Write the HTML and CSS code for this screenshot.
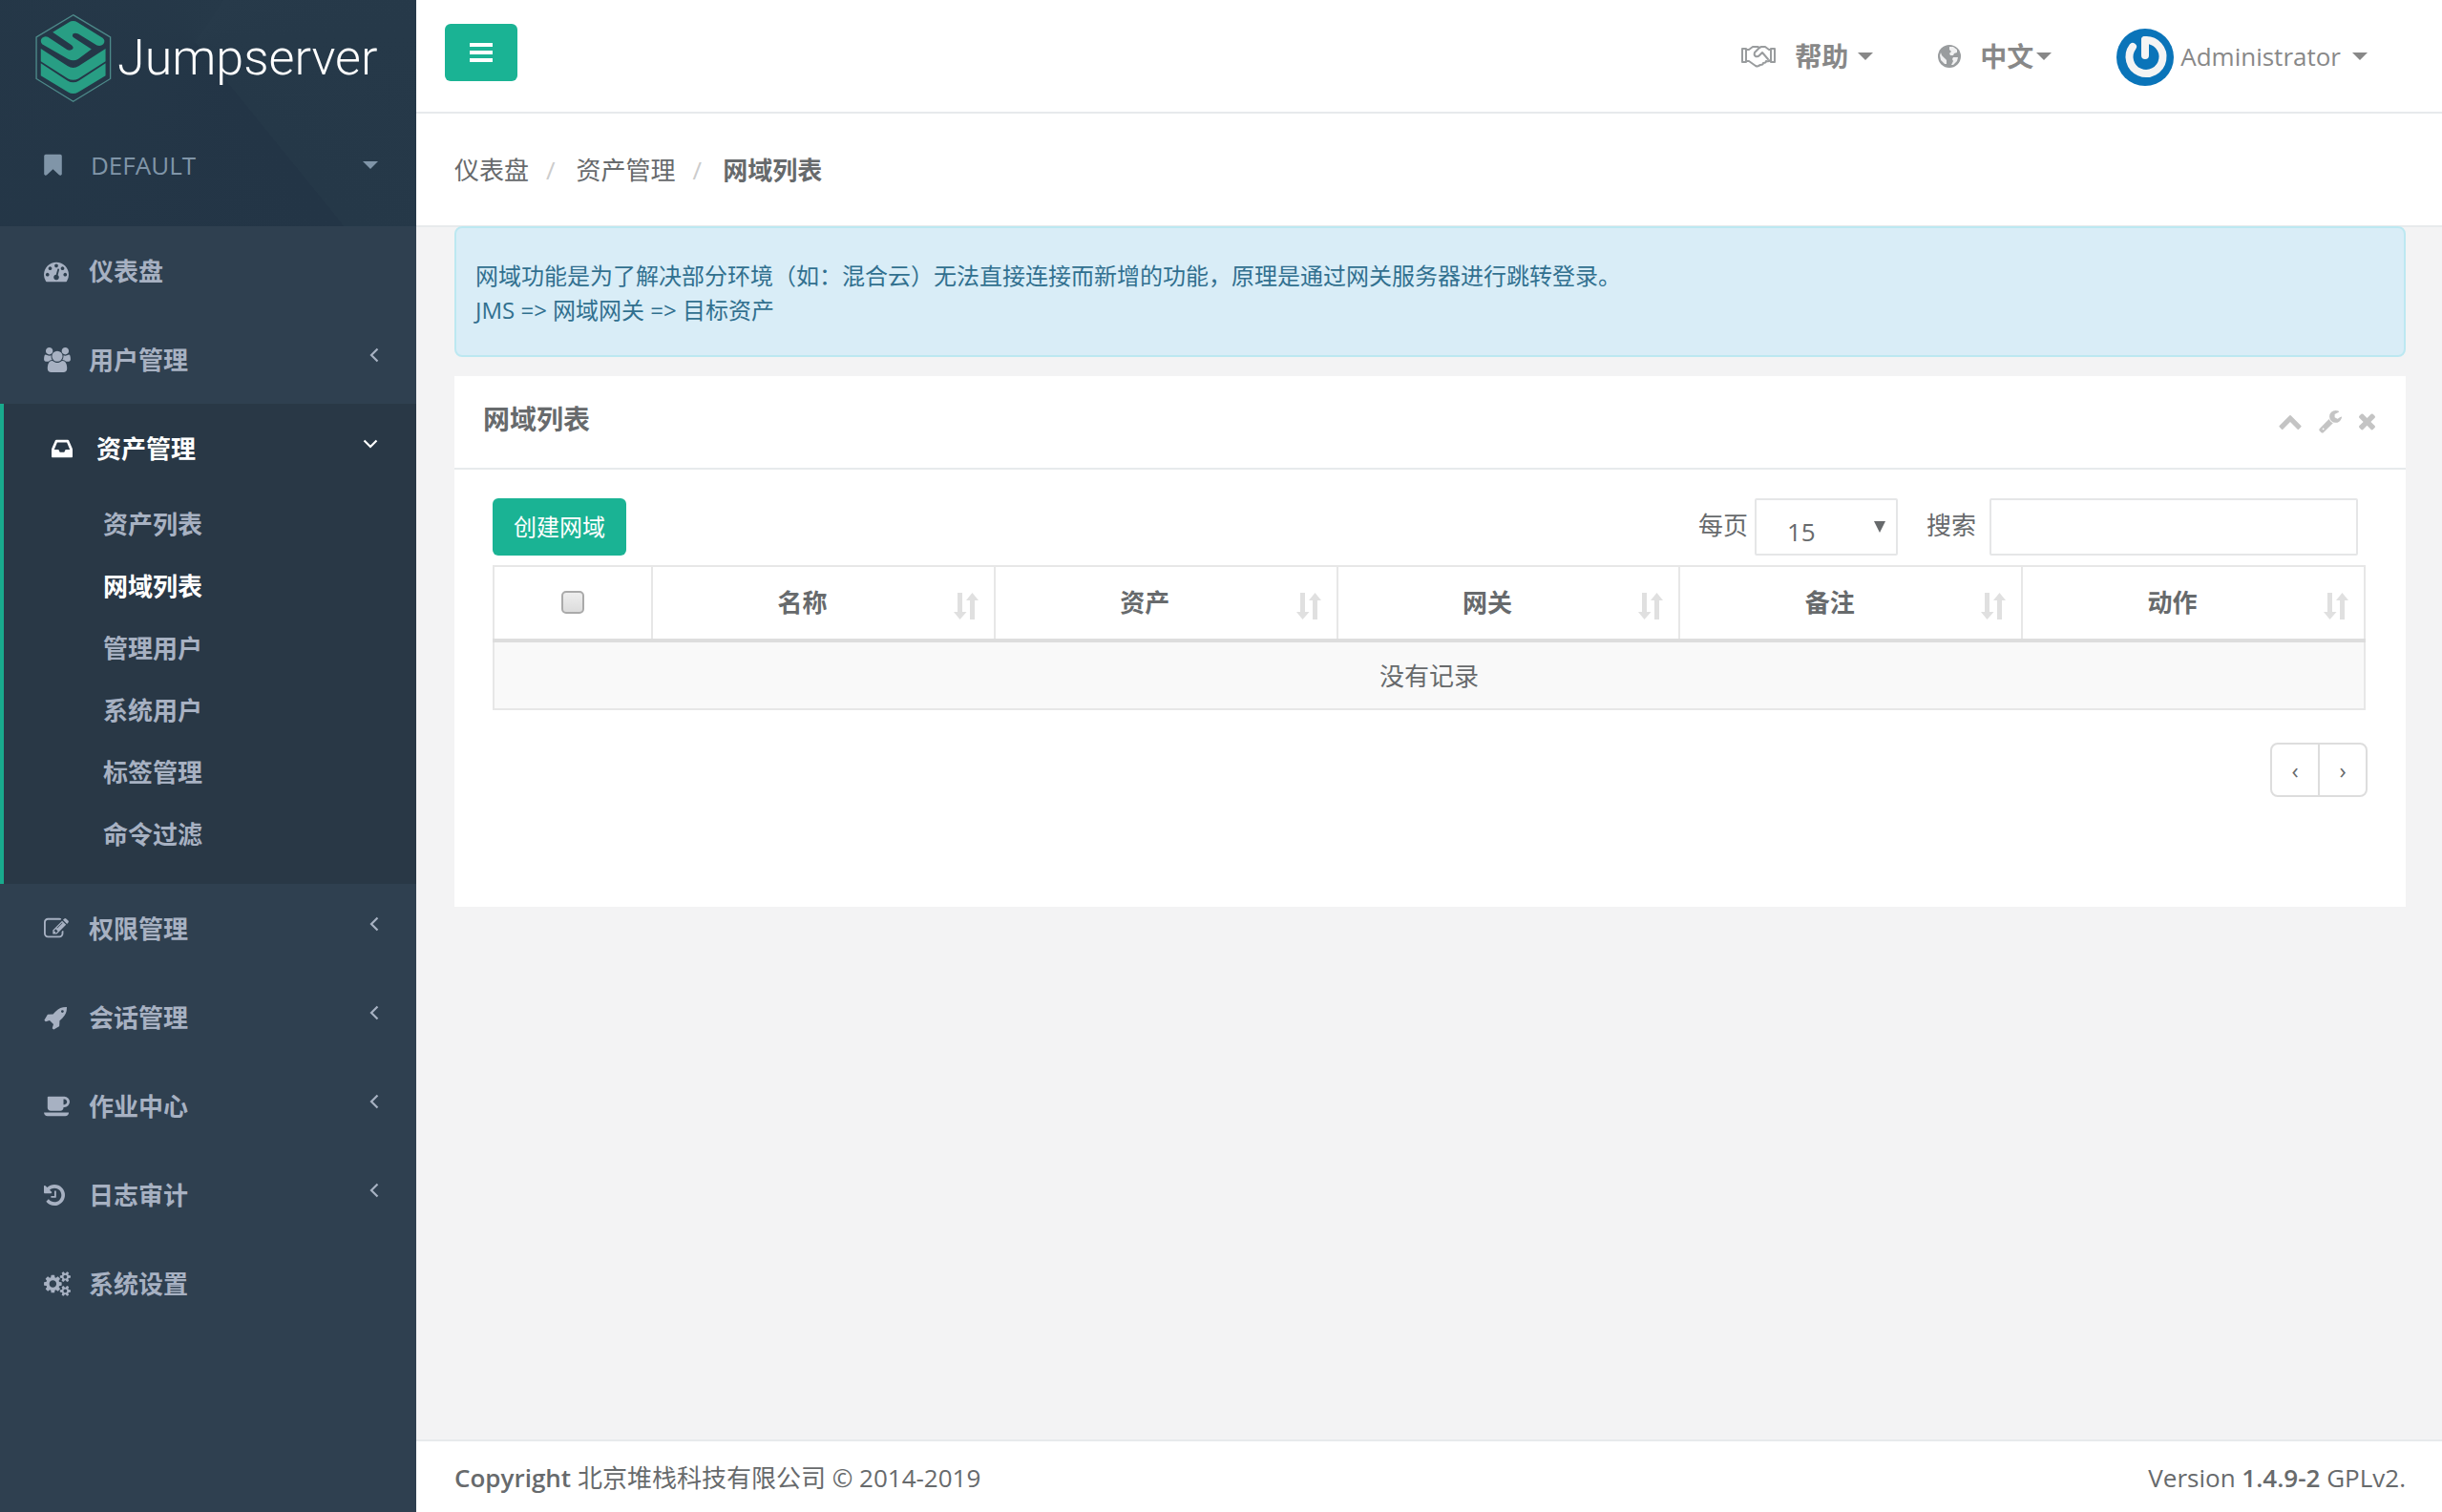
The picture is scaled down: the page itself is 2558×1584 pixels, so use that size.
FILE: index.html
```html
<!DOCTYPE html>
<html lang="zh-CN">
<head>
<meta charset="utf-8">
<meta name="viewport" content="width=device-width, initial-scale=1">
<title>网域列表 - Jumpserver</title>
<link rel="stylesheet" href="styles.css">
</head>
<body>
<svg class="sprite" aria-hidden="true">
  <symbol id="i-bookmark" viewBox="256 0 1280 1792"><path d="M1420 128q23 0 44 9 33 13 52.5 41t19.5 62v1289q0 34-19.5 62t-52.5 41q-19 8-44 8-48 0-83-32l-441-424-441 424q-36 33-83 33-23 0-44-9-33-13-52.5-41t-19.5-62v-1289q0-34 19.5-62t52.5-41q21-9 44-9h1048z"/></symbol>
  <symbol id="i-dashboard" viewBox="0 0 1792 1792"><path d="M384 1152q0-53-37.5-90.5t-90.5-37.5-90.5 37.5-37.5 90.5 37.5 90.5 90.5 37.5 90.5-37.5 37.5-90.5zm192-448q0-53-37.5-90.5t-90.5-37.5-90.5 37.5-37.5 90.5 37.5 90.5 90.5 37.5 90.5-37.5 37.5-90.5zm428 481l101-382q6-26-7.5-48.5t-38.5-29.5-48 6.5-30 39.5l-101 382q-60 5-107 43.5t-63 98.5q-20 77 20 146t117 89 146-20 89-117q16-60-6-117t-72-91zm660-33q0-53-37.5-90.5t-90.5-37.5-90.5 37.5-37.5 90.5 37.5 90.5 90.5 37.5 90.5-37.5 37.5-90.5zm-640-640q0-53-37.5-90.5t-90.5-37.5-90.5 37.5-37.5 90.5 37.5 90.5 90.5 37.5 90.5-37.5 37.5-90.5zm448 192q0-53-37.5-90.5t-90.5-37.5-90.5 37.5-37.5 90.5 37.5 90.5 90.5 37.5 90.5-37.5 37.5-90.5zm320 448q0 261-141 483-19 29-54 29h-1402q-35 0-54-29-141-221-141-483 0-182 71-348t191-286 286-191 348-71 348 71 286 191 191 286 71 348z"/></symbol>
  <symbol id="i-users" viewBox="0 0 1920 1792"><path d="M593 896q-162 5-265 128h-134q-82 0-138-40.5t-56-118.5q0-353 124-353 6 0 43.5 21t97.5 42.5 119 21.5q67 0 133-23-5 37-5 66 0 139 81 256zm1071 637q0 120-73 189.5t-194 69.5h-874q-121 0-194-69.5t-73-189.5q0-53 3.5-103.5t14-109 26.5-108.5 43-97.5 62-81 85.5-53.5 111.5-20q10 0 43 21.5t73 48 107 48 135 21.5 135-21.5 107-48 73-48 43-21.5q61 0 111.5 20t85.5 53.5 62 81 43 97.5 26.5 108.5 14 109 3.5 103.5zm-1024-1277q0 106-75 181t-181 75-181-75-75-181 75-181 181-75 181 75 75 181zm704 384q0 159-112.5 271.5t-271.5 112.5-271.5-112.5-112.5-271.5 112.5-271.5 271.5-112.5 271.5 112.5 112.5 271.5zm576 225q0 78-56 118.5t-138 40.5h-134q-103-123-265-128 81-117 81-256 0-29-5-66 66 23 133 23 59 0 119-21.5t97.5-42.5 43.5-21q124 0 124 353zm-128-609q0 106-75 181t-181 75-181-75-75-181 75-181 181-75 181 75 75 181z"/></symbol>
  <symbol id="i-inbox" viewBox="128 0 1536 1792"><path d="M1151 960h316q-1-3-2.5-8t-2.5-8l-212-496h-708l-212 496q-1 2-2.5 8t-2.5 8h316l95 192h320zm513 30v482q0 26-19 45t-45 19h-1408q-26 0-45-19t-19-45v-482q0-62 25-123l238-552q10-25 36.5-42t52.5-17h832q26 0 52.5 17t36.5 42l238 552q25 61 25 123z"/></symbol>
  <symbol id="i-edit" viewBox="0 0 1792 1792"><path d="M888 1184l116-116-152-152-116 116v56h96v96h56zm440-720q-16-16-33 1l-350 350q-17 17-1 33t33-1l350-350q17-17 1-33zm80 594v190q0 119-84.5 203.5t-203.5 84.5h-832q-119 0-203.5-84.5t-84.5-203.5v-832q0-119 84.5-203.5t203.5-84.5h832q63 0 117 25 15 7 18 23 3 17-9 29l-49 49q-14 14-32 8-23-6-45-6h-832q-66 0-113 47t-47 113v832q0 66 47 113t113 47h832q66 0 113-47t47-113v-126q0-13 9-22l64-64q15-15 35-7t20 29zm-96-738l288 288-672 672h-288v-288zm444 132l-92 92-288-288 92-92q28-28 68-28t68 28l152 152q28 28 28 68t-28 68z"/></symbol>
  <symbol id="i-rocket" viewBox="0 0 1664 1792"><path d="M1440 448q0-40-28-68t-68-28-68 28-28 68 28 68 68 28 68-28 28-68zm224-288q0 249-75.5 430.5t-253.5 360.5q-81 80-195 176l-20 379q-2 16-16 26l-384 224q-7 4-16 4-12 0-23-9l-64-64q-13-14-8-32l85-276-281-281-276 85q-3 1-9 1-14 0-23-9l-64-64q-17-19-5-39l224-384q10-14 26-16l379-20q96-114 176-195 188-187 358-258t431-71q14 0 24 9.5t10 22.5z"/></symbol>
  <symbol id="i-coffee" viewBox="0 0 1920 1792"><path d="M1664 576q0-80-56-136t-136-56h-64v384h64q80 0 136-56t56-136zm-1664 768h1792q0 106-75 181t-181 75h-1280q-106 0-181-75t-75-181zm1856-768q0 159-112.5 271.5t-271.5 112.5h-64v32q0 92-66 158t-158 66h-704q-92 0-158-66t-66-158v-736q0-26 19-45t45-19h1152q159 0 271.5 112.5t112.5 271.5z"/></symbol>
  <symbol id="i-history" viewBox="128 0 1536 1792"><path d="M1664 896q0 156-61 298t-164 245-245 164-298 61q-172 0-327-72.5t-264-204.5q-7-10-6.5-22.5t8.5-20.5l137-138q10-9 25-9 16 2 23 12 73 95 179 147t225 52q104 0 198.5-40.5t163.5-109.5 109.5-163.5 40.5-198.5-40.5-198.5-109.5-163.5-163.5-109.5-198.5-40.5q-98 0-188 35.5t-160 101.5l137 138q31 30 14 69-17 40-59 40h-448q-26 0-45-19t-19-45v-448q0-42 40-59 39-17 69 14l130 129q107-101 244.5-156.5t284.5-55.5q156 0 298 61t245 164 164 245 61 298zm-640-288v448q0 14-9 23t-23 9h-320q-14 0-23-9t-9-23v-64q0-14 9-23t23-9h224v-352q0-14 9-23t23-9h64q14 0 23 9t9 23z"/></symbol>
  <symbol id="i-cogs" viewBox="0 0 1920 1792"><path d="M896 896q0-106-75-181t-181-75-181 75-75 181 75 181 181 75 181-75 75-181zm768 512q0-52-38-90t-90-38-90 38-38 90q0 53 37.5 90.5t90.5 37.5 90.5-37.5 37.5-90.5zm0-1024q0-52-38-90t-90-38-90 38-38 90q0 53 37.5 90.5t90.5 37.5 90.5-37.5 37.5-90.5zm-384 421v185q0 10-7 19.5t-16 10.5l-155 24q-11 35-32 76 34 48 90 115 7 11 7 20 0 12-7 19-23 30-82.5 89.5t-78.5 59.5q-11 0-21-7l-115-90q-37 19-77 31-11 108-23 155-7 24-30 24h-186q-11 0-20-7.5t-10-17.5l-23-153q-34-10-75-31l-118 89q-7 7-20 7-11 0-21-8-144-133-144-160 0-9 7-19 10-14 41-53t47-61q-23-44-35-82l-152-24q-10-1-17-9.5t-7-19.5v-185q0-10 7-19.5t16-10.5l155-24q11-35 32-76-34-48-90-115-7-11-7-20 0-12 7-20 22-30 82-89t79-59q11 0 21 7l115 90q34-18 77-32 11-108 23-154 7-24 30-24h186q11 0 20 7.5t10 17.5l23 153q34 10 75 31l118-89q8-7 20-7 11 0 21 8 144 133 144 160 0 8-7 19-12 16-42 54t-45 60q23 48 34 82l152 23q10 2 17 10.5t7 19.5zm640 533v140q0 16-149 31-12 27-30 52 51 113 51 138 0 4-4 7-122 71-124 71-8 0-46-47t-52-68q-20 2-30 2t-30-2q-14 21-52 68t-46 47q-2 0-124-71-4-3-4-7 0-25 51-138-18-25-30-52-149-15-149-31v-140q0-16 149-31 13-29 30-52-51-113-51-138 0-4 4-7 4-2 35-20t59-34 30-16q8 0 46 46.5t52 67.5q20-2 30-2t30 2q51-71 92-112l6-2q4 0 124 70 4 3 4 7 0 25-51 138 17 23 30 52 149 15 149 31zm0-1024v140q0 16-149 31-12 27-30 52 51 113 51 138 0 4-4 7-122 71-124 71-8 0-46-47t-52-68q-20 2-30 2t-30-2q-14 21-52 68t-46 47q-2 0-124-71-4-3-4-7 0-25 51-138-18-25-30-52-149-15-149-31v-140q0-16 149-31 13-29 30-52-51-113-51-138 0-4 4-7 4-2 35-20t59-34 30-16q8 0 46 46.5t52 67.5q20-2 30-2t30 2q51-71 92-112l6-2q4 0 124 70 4 3 4 7 0 25-51 138 17 23 30 52 149 15 149 31z"/></symbol>
  <symbol id="i-wrench" viewBox="64 0 1664 1792"><path d="M448 1472q0-26-19-45t-45-19-45 19-19 45 19 45 45 19 45-19 19-45zm644-420l-682 682q-37 37-90 37-52 0-91-37l-106-108q-38-36-38-90 0-53 38-91l681-681q39 98 114.5 173.5t173.5 114.5zm634-435q0 39-23 106-47 134-164.5 217.5t-258.5 83.5q-185 0-316.5-131.5t-131.5-316.5 131.5-316.5 316.5-131.5q58 0 121.5 16.5t107.5 46.5q16 11 16 28t-16 28l-293 169v224l193 107q5-3 79-48.5t135.5-81 70.5-35.5q15 0 23.5 10t8.5 25z"/></symbol>
  <symbol id="i-up" viewBox="64 0 1664 1792"><path d="M1683 1331l-166 165q-19 19-45 19t-45-19l-531-531-531 531q-19 19-45 19t-45-19l-166-165q-19-19-19-45.5t19-45.5l742-741q19-19 45-19t45 19l742 741q19 19 19 45.5t-19 45.5z"/></symbol>
  <symbol id="i-times" viewBox="302 0 1188 1792"><path d="M1490 1322q0 40-28 68l-136 136q-28 28-68 28t-68-28l-294-294-294 294q-28 28-68 28t-68-28l-136-136q-28-28-28-68t28-68l294-294-294-294q-28-28-28-68t28-68l136-136q28-28 68-28t68 28l294 294 294-294q28-28 68-28t68 28l136 136q28 28 28 68t-28 68l-294 294 294 294q28 28 28 68z"/></symbol>
  <symbol id="i-sort" viewBox="0 0 26 28"><path d="M4 0h5v20h4.500L6.500 28 0 20h4zM17 28h5V8h4L19.500 0 13 8h4z"/></symbol>
  <symbol id="i-angle" viewBox="0 0 10 16"><path d="M8.500 1.500 2 8l6.500 6.500" fill="none" stroke="currentColor" stroke-width="2.200"/></symbol>
</svg>

<div class="layout">
  <nav class="sidebar" aria-label="主导航">
    <div class="brand">
      <a class="logo" href="#">
        <svg class="logo-mark" viewBox="52 42 238 280" aria-hidden="true">
          <path d="M170 47l116 69v130l-116 71-115-71V116z" fill="none" stroke="#4d8a8a" stroke-width="4"/>
          <g fill="#289e84">
            <path d="M106 101l50-31q14-8 28 0l78 49q10 9 2 19-8 8-20 4l-58-36q-10-5-17 0-4 6 3 12l55 36-42 31q-14 8-30 0L73 138q-8-10 0-19 9-8 18-3l60 39q9 5 17-1 5-6-3-13z"/>
            <path d="M69 152l83 54q18 11 36 0l83-54v40l-85 54q-16 8-32 0l-85-54z"/>
            <path d="M69 198l83 54q18 11 36 0l83-54v38l-85 52q-16 9-32 0l-85-52z"/>
          </g>
        </svg>
        <span class="logo-text">Jumpserver</span>
      </a>
      <a class="org" href="#">
        <svg class="icon-bookmark"><use href="#i-bookmark"/></svg>
        <span class="org-name">DEFAULT</span>
        <span class="caret"></span>
      </a>
    </div>
    <ul class="menu">
      <li><a class="menu-link" href="#"><span class="menu-icon"><svg class="w26"><use href="#i-dashboard"/></svg></span>仪表盘</a></li>
      <li><a class="menu-link" href="#"><span class="menu-icon"><svg class="w28"><use href="#i-users"/></svg></span>用户管理<svg class="angle"><use href="#i-angle"/></svg></a></li>
      <li class="active">
        <a class="menu-link" href="#"><span class="menu-icon"><svg class="w22"><use href="#i-inbox"/></svg></span>资产管理<svg class="angle open"><use href="#i-angle"/></svg></a>
        <ul class="submenu">
          <li><a href="#">资产列表</a></li>
          <li><a href="#" class="current" aria-current="page">网域列表</a></li>
          <li><a href="#">管理用户</a></li>
          <li><a href="#">系统用户</a></li>
          <li><a href="#">标签管理</a></li>
          <li><a href="#">命令过滤</a></li>
        </ul>
      </li>
      <li><a class="menu-link" href="#"><span class="menu-icon"><svg class="w26"><use href="#i-edit"/></svg></span>权限管理<svg class="angle"><use href="#i-angle"/></svg></a></li>
      <li><a class="menu-link" href="#"><span class="menu-icon"><svg class="w24"><use href="#i-rocket"/></svg></span>会话管理<svg class="angle"><use href="#i-angle"/></svg></a></li>
      <li><a class="menu-link" href="#"><span class="menu-icon"><svg class="w28"><use href="#i-coffee"/></svg></span>作业中心<svg class="angle"><use href="#i-angle"/></svg></a></li>
      <li><a class="menu-link" href="#"><span class="menu-icon"><svg class="w22"><use href="#i-history"/></svg></span>日志审计<svg class="angle"><use href="#i-angle"/></svg></a></li>
      <li><a class="menu-link" href="#"><span class="menu-icon"><svg class="w28"><use href="#i-cogs"/></svg></span>系统设置</a></li>
    </ul>
  </nav>

  <div class="page">
    <header class="topbar">
      <button class="toggle" type="button" aria-label="切换菜单">
        <svg viewBox="0 0 24 20" aria-hidden="true"><path d="M0 0h24v4H0zM0 8h24v4H0zM0 16h24v4H0z"/></svg>
      </button>
      <div class="topnav">
        <a class="top-link help" href="#">
          <svg class="icon-hand" viewBox="0 0 36 24" aria-hidden="true">
            <g fill="none" stroke="currentColor" stroke-width="2" stroke-linejoin="round" stroke-linecap="round">
              <path d="M1 4h4v14H1zM35 4h-4v14h4z"/>
              <path d="M5 5h3l4-3h5l2 1 2-1h4l4 3h2"/>
              <path d="M19 3l-5 5q-1 3 1 4t4-1l3-3 6 7"/>
              <path d="M5 17h3l7 5q2 1 3 0l2-1q3 0 3-2 3 0 3-2 3 1 4-1h1"/>
            </g>
          </svg>
          <b>帮助</b><span class="caret"></span>
        </a>
        <a class="top-link lang" href="#">
          <svg class="icon-globe" viewBox="0 0 24 24" aria-hidden="true">
            <circle cx="12" cy="12" r="12"/>
            <path fill="#fff" d="M12 2l4 0 4 3 0 3-3 1-1 2-3 0-1-2 2-2-2-2zM16 13l5 0-1 4-4 4-2 0 2-4-1-2zM3 8l1 3 3 3 2 2 0 4-2 0-4-4-1-5z" opacity=".85"/>
          </svg>
          <b>中文</b><span class="caret"></span>
        </a>
        <a class="top-link user" href="#">
          <svg class="avatar" viewBox="0 0 60 60" aria-hidden="true">
            <circle cx="30" cy="30" r="30" fill="#0a74b9"/>
            <g fill="none" stroke="#f4f4f4" stroke-width="8" stroke-linecap="round">
              <path d="M17 19a17.500 17.500 0 1 0 13-7"/>
              <path d="M30 12v16"/>
            </g>
          </svg>
          <span>Administrator</span><span class="caret"></span>
        </a>
      </div>
    </header>

    <nav class="heading" aria-label="面包屑">
      <ol class="breadcrumb">
        <li><a href="#">仪表盘</a></li>
        <li><a href="#">资产管理</a></li>
        <li aria-current="page"><strong>网域列表</strong></li>
      </ol>
    </nav>

    <main class="content">
      <div class="alert" role="note">
        网域功能是为了解决部分环境（如：混合云）无法直接连接而新增的功能，原理是通过网关服务器进行跳转登录。<br>
        JMS =&gt; 网域网关 =&gt; 目标资产
      </div>

      <section class="card">
        <div class="card-head">
          <h5>网域列表</h5>
          <div class="tools">
            <button type="button" aria-label="收起"><svg class="w24"><use href="#i-up"/></svg></button>
            <button type="button" aria-label="设置"><svg class="w24"><use href="#i-wrench"/></svg></button>
            <button type="button" aria-label="关闭"><svg class="w17"><use href="#i-times"/></svg></button>
          </div>
        </div>
        <div class="card-body">
          <div class="toolbar">
            <button class="create" type="button">创建网域</button>
            <div class="filters">
              <label for="page-size">每页</label>
              <select id="page-size" class="size"><option>15</option><option>25</option><option>50</option></select>
              <label for="search">搜索</label>
              <input id="search" class="search" type="search">
            </div>
          </div>
          <table class="grid">
            <thead>
              <tr>
                <th class="check"><input type="checkbox" aria-label="全选"></th>
                <th><div class="th"><span>名称</span><svg><use href="#i-sort"/></svg></div></th>
                <th><div class="th"><span>资产</span><svg><use href="#i-sort"/></svg></div></th>
                <th><div class="th"><span>网关</span><svg><use href="#i-sort"/></svg></div></th>
                <th><div class="th"><span>备注</span><svg><use href="#i-sort"/></svg></div></th>
                <th><div class="th"><span>动作</span><svg><use href="#i-sort"/></svg></div></th>
              </tr>
            </thead>
            <tbody>
              <tr><td colspan="6">没有记录</td></tr>
            </tbody>
          </table>
          <div class="pager">
            <button type="button" aria-label="上一页">‹</button>
            <button type="button" aria-label="下一页">›</button>
          </div>
        </div>
      </section>
    </main>

    <footer class="footer">
      <div><strong>Copyright</strong> 北京堆栈科技有限公司 © 2014-2019</div>
      <div>Version <strong>1.4.9-2</strong> GPLv2.</div>
    </footer>
  </div>
</div>
</body>
</html>
```
FILE: styles.css
```css
* { box-sizing: border-box; }

body {
  margin: 0;
  background: #2f4050;
  color: #676a6c;
  font-family: "Open Sans", "Noto Sans CJK SC", sans-serif;
  font-size: 26px;
  line-height: 36px;
}

a { color: inherit; text-decoration: none; }
ul, ol { list-style: none; margin: 0; padding: 0; }
button, input, select { font: inherit; color: inherit; margin: 0; }
button { border: 0; padding: 0; background: none; cursor: pointer; }
svg { display: block; fill: currentColor; flex: none; }

.sprite { position: absolute; width: 0; height: 0; }

.w17 { width: 17px; height: 26px; }
.w22 { width: 22px; height: 26px; }
.w24 { width: 24px; height: 26px; }
.w26 { width: 26px; height: 26px; }
.w28 { width: 28px; height: 26px; }

.caret {
  border: 8px solid transparent;
  border-top-color: currentColor;
  border-bottom: 0;
}

.layout { display: flex; min-height: 100vh; }

/* Sidebar */
.sidebar { flex: none; width: 436px; color: #a7b1c2; }

.brand {
  height: 237px;
  background: conic-gradient(from 33deg at 205px 45px, #273a4a 0, #253848 108deg, #233546 108deg, #263949 360deg);
}

.logo { display: flex; align-items: center; gap: 6px; height: 122px; padding-left: 37px; color: #fff; }
.logo-mark { width: 80px; height: 94px; }
.logo-text { font-family: Roboto, sans-serif; font-weight: 300; font-size: 52px; line-height: 64px; }

.org { display: flex; align-items: center; height: 102px; padding: 0 40px 0 46px; color: #8095a8; }
.icon-bookmark { width: 19px; height: 26px; }
.org-name { flex: 1; margin-left: 30px; }

.menu { font-weight: 700; }
.menu-link { display: flex; align-items: center; height: 93px; padding: 0 39px 0 46px; }
.menu-icon { width: 47px; }
.angle { width: 10px; height: 16px; margin: 0 0 10px auto; }
.angle.open { transform: rotate(-90deg); }
.active { border-left: 4px solid #19aa8d; background: #293846; padding-bottom: 20px; }
.active .menu-link { padding-left: 50px; padding-right: 43px; color: #fff; }
.submenu a { display: block; padding: 15px 0 14px 104px; }
.submenu .current { color: #fff; }

/* Page */
.page { flex: 1; min-width: 0; display: flex; flex-direction: column; background: #f3f3f4; }

.topbar {
  display: flex;
  justify-content: space-between;
  height: 119px;
  padding: 0 78px 0 30px;
  background: #fff;
  border-bottom: 2px solid #e7eaec;
}
.toggle {
  display: flex;
  align-items: center;
  justify-content: center;
  width: 76px;
  height: 60px;
  margin-top: 25px;
  border-radius: 6px;
  background: #1ab394;
  color: #fff;
}
.toggle svg { width: 24px; height: 20px; }

.topnav { display: flex; align-items: center; gap: 68px; color: #888; }
.topnav b { font-size: 28px; }
.top-link { display: flex; align-items: center; }
.icon-hand { width: 36px; height: 24px; margin-right: 20px; color: #999c9e; }
.icon-globe { width: 24px; height: 24px; margin-right: 20px; color: #999c9e; }
.help .caret { margin-left: 10px; }
.lang .caret { margin-left: 3px; }
.user .caret { margin-left: 12px; }
.avatar { width: 60px; height: 60px; margin: 3px 7px 0 0; }

.heading { padding: 41px 40px 40px; background: #fff; border-bottom: 2px solid #e7eaec; }
.breadcrumb { display: flex; }
.breadcrumb li + li::before { content: "/"; margin: 0 22px 0 18px; color: #ccc; }

.content { flex: 1; padding: 0 38px 0 40px; }

.alert {
  margin-top: -1px;
  margin-bottom: 20px;
  padding: 32px 20px 29px;
  border: 2px solid #bce8f1;
  border-radius: 8px;
  background: #d9edf7;
  color: #31708f;
  font-size: 24px;
}

.card { background: #fff; }
.card-head {
  display: flex;
  align-items: center;
  justify-content: space-between;
  height: 98px;
  padding: 0 32px 6px 30px;
  border-bottom: 2px solid #e7eaec;
}
.card-head h5 { margin: 0; font-size: 28px; font-weight: 700; }
.tools { display: flex; gap: 18px; margin-top: 4px; color: #c4c4c4; }

.card-body { padding: 30px 42px 115px 40px; }
.toolbar { display: flex; align-items: center; justify-content: space-between; padding-right: 8px; margin-bottom: 10px; }
.create { height: 60px; padding: 0 22px; border-radius: 6px; background: #1ab394; color: #fff; font-size: 24px; }
.filters { display: flex; align-items: center; }
.filters label { padding-bottom: 4px; }
.size, .search { height: 60px; border: 2px solid #e5e6e7; border-radius: 2px; background: #fff; }
.size {
  appearance: none;
  width: 150px;
  margin: 0 30px 0 7px;
  padding: 10px 32px 0;
  background: #fff url("data:image/svg+xml,%3Csvg xmlns='http://www.w3.org/2000/svg' width='12' height='12'%3E%3Cpath d='M0 0h12L6 12z' fill='%23676a6c'/%3E%3C/svg%3E") no-repeat right 11px top 22px;
}
.search { appearance: none; width: 386px; margin-left: 14px; padding: 0 16px; }

.grid { width: 100%; table-layout: fixed; border-collapse: collapse; text-align: center; }
.grid th, .grid td { border: 2px solid #e7e7e7; padding: 0; }
.grid th { height: 78px; border-bottom: 4px solid #ddd; padding-bottom: 2px; }
.grid td { height: 72px; background: #f9f9f9; }
.grid .check { width: 166px; }
.check input {
  appearance: none;
  display: block;
  width: 24px;
  height: 24px;
  margin: 0 auto;
  border: 2px solid #aaa;
  border-radius: 5px;
  background: linear-gradient(#eee, #dcdcdc);
}
.th { display: flex; align-items: flex-start; padding: 0 16px; }
.th span { flex: 1; margin-right: 18px; }
.th svg { width: 26px; height: 28px; margin-top: 8px; color: #e0e0e0; }

.pager { display: flex; justify-content: flex-end; margin: 34px -2px 0 0; }
.pager button { width: 52px; height: 57px; border: 2px solid #ddd; font-size: 24px; }
.pager button:first-child { border-radius: 8px 0 0 8px; }
.pager button:last-child { border-radius: 0 8px 8px 0; margin-left: -2px; }

.footer {
  display: flex;
  justify-content: space-between;
  padding: 20px 38px 18px 40px;
  background: #fff;
  border-top: 2px solid #e7eaec;
}
.footer strong { font-weight: 600; }
```
